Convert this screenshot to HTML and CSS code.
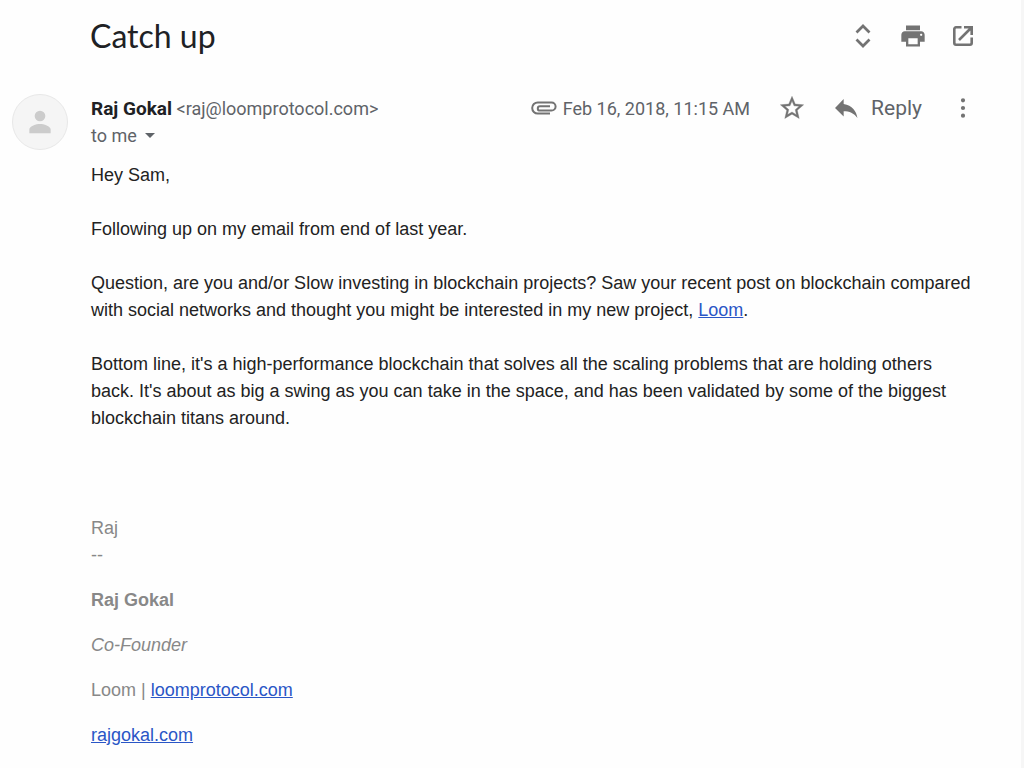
FILE: index.html
```html
<!DOCTYPE html>
<html lang="en">
<head>
<meta charset="utf-8">
<title>Catch up</title>
<meta name="viewport" content="width=device-width, initial-scale=1">
<link rel="stylesheet" href="styles.css">
</head>
<body>
<main class="mail">
  <header class="subject-bar">
    <h1 class="subject">Catch up</h1>
    <div class="tools">
      <button class="icon-button" type="button" aria-label="Expand all">
        <svg class="icon" viewBox="0 0 28 28"><path d="M7.500 10.500 14 4l6.500 6.500M7.500 17.500 14 24l6.500-6.500" fill="none" stroke="currentColor" stroke-width="2.700"/></svg>
      </button>
      <button class="icon-button" type="button" aria-label="Print">
        <svg class="icon" viewBox="0 0 24 24"><path fill="currentColor" d="M19 8H5c-1.660 0-3 1.340-3 3v6h4v4h12v-4h4v-6c0-1.660-1.340-3-3-3zm-3 11H8v-5h8v5zm3-7c-.55 0-1-.45-1-1s.45-1 1-1 1 .45 1 1-.45 1-1 1zm-1-9H6v4h12V3z"/></svg>
      </button>
      <button class="icon-button" type="button" aria-label="Open in new window">
        <svg class="icon" viewBox="0 0 28 28"><path d="M12.500 5.300H7a1.700 1.700 0 0 0-1.700 1.700v14A1.700 1.700 0 0 0 7 22.700h14a1.700 1.700 0 0 0 1.700-1.700v-5.500M10 18 21.500 6.500M15 5.300h7.700V13" fill="none" stroke="currentColor" stroke-width="2.600"/></svg>
      </button>
    </div>
  </header>

  <article class="message">
    <div class="avatar">
      <svg class="person" viewBox="0 0 24 24" aria-hidden="true"><path fill="currentColor" d="M12 11.500a4 4 0 1 0 0-8 4 4 0 0 0 0 8zm0 2c-2.700 0-8 1.400-8 4.200V20.500h16v-2.800c0-2.800-5.300-4.200-8-4.200z"/></svg>
    </div>
    <div class="content">
      <div class="meta">
        <div class="sender"><strong class="name">Raj Gokal</strong> <span class="address">&lt;raj@loomprotocol.com&gt;</span></div>
        <div class="date">
          <svg class="clip" viewBox="0 0 26 16" aria-hidden="true"><path d="M19 13.600H6.800a5.600 5.600 0 0 1 0-11.200H20.500a4.100 4.100 0 0 1 0 8.200H9a2.100 2.100 0 0 1 0-4.400H19" fill="none" stroke="currentColor" stroke-width="2"/></svg>
          <time datetime="2018-02-16T11:15">Feb 16, 2018, 11:15 AM</time>
        </div>
        <button class="icon-button" type="button" aria-label="Star">
          <svg class="icon" viewBox="0 0 24 24"><path fill="currentColor" stroke="currentColor" stroke-width=".3" d="m22 9.240-7.190-.62L12 2 9.190 8.630 2 9.240l5.460 4.730L5.820 21 12 17.270 18.180 21l-1.630-7.030L22 9.240zM12 15.400l-3.760 2.270 1-4.280-3.320-2.880 4.380-.38L12 6.100l1.710 4.040 4.380.38-3.320 2.880 1 4.280L12 15.400z"/></svg>
        </button>
        <button class="reply" type="button">
          <svg class="icon" viewBox="0 0 24 24" aria-hidden="true"><path fill="currentColor" d="M10 8.500V4.300L2.600 12l7.400 7.300v-4.500c5 0 8.600 1.500 11.800 5.700-.9-5.800-4.400-11-11.800-12z"/></svg>
          <span class="reply-label">Reply</span>
        </button>
        <button class="icon-button" type="button" aria-label="More">
          <svg class="icon" viewBox="0 0 24 24"><path fill="currentColor" d="M12 7.200a1.800 1.800 0 1 0 0-3.600 1.800 1.800 0 0 0 0 3.600zm0 3a1.800 1.800 0 1 0 0 3.600 1.800 1.800 0 0 0 0-3.600zm0 6.600a1.800 1.800 0 1 0 0 3.600 1.800 1.800 0 0 0 0-3.600z"/></svg>
        </button>
      </div>
      <button class="recipient" type="button">to me
        <svg class="caret" viewBox="0 0 10 5" aria-hidden="true"><path fill="currentColor" d="M0 0h10L5 5z"/></svg>
      </button>

      <div class="body">
        <p>Hey Sam,</p>
        <p>Following up on my email from end of last year.</p>
        <p>Question, are you and/or Slow investing in blockchain projects? Saw your recent post on blockchain compared with social networks and thought you might be interested in my new project, <a href="#loom">Loom</a>.</p>
        <p>Bottom line, it's a high-performance blockchain that solves all the scaling problems that are holding others back. It's about as big a swing as you can take in the space, and has been validated by some of the biggest blockchain titans around.</p>
      </div>

      <footer class="signature">
        <p>Raj<br>--</p>
        <p><strong>Raj Gokal</strong></p>
        <p><em>Co-Founder</em></p>
        <p>Loom | <a href="#loomprotocol">loomprotocol.com</a></p>
        <p><a href="#rajgokal">rajgokal.com</a></p>
      </footer>
    </div>
  </article>
</main>
</body>
</html>
```
FILE: styles.css
```css
* {
  box-sizing: border-box;
}

body {
  margin: 0;
  background: #fefefe;
  color: #222;
  font-family: "Liberation Sans", Arial, sans-serif;
  font-size: 18px;
  line-height: 27px;
}

h1,
p {
  margin: 0;
}

button {
  padding: 0;
  border: 0;
  background: none;
  color: #737373;
  font-family: Roboto, sans-serif;
  cursor: pointer;
}

a {
  color: #2a56c6;
}

.mail {
  min-height: 100vh;
  padding: 16px 44px 16px 12px;
  border-right: 3px solid #f6f6f6;
}

.subject-bar {
  display: flex;
  align-items: center;
  justify-content: space-between;
  height: 40px;
  padding-left: 78px;
}

.subject {
  color: #202124;
  font-family: Lato, sans-serif;
  font-size: 32px;
  font-weight: 400;
  line-height: 38px;
}

.tools {
  display: flex;
  gap: 22px;
}

.icon-button {
  display: flex;
}

.icon {
  width: 28px;
  height: 28px;
}

.message {
  display: flex;
  gap: 23px;
  margin-top: 38px;
}

.avatar {
  display: flex;
  flex: none;
  align-items: center;
  justify-content: center;
  width: 56px;
  height: 56px;
  border: 1px solid #e8e8e8;
  border-radius: 50%;
  background: #f5f5f5;
  color: #ccc;
}

.person {
  width: 32px;
  height: 32px;
}

.content {
  flex: 1;
  min-width: 0;
}

.meta {
  display: flex;
  align-items: center;
  height: 28px;
  color: #5f6368;
  font-family: Roboto, sans-serif;
  font-size: 18px;
}

.sender {
  flex: 1;
  white-space: nowrap;
}

.name {
  color: #202124;
  font-size: 19px;
}

.date {
  display: flex;
  align-items: center;
  gap: 6px;
  margin-right: 28px;
  white-space: nowrap;
}

.clip {
  width: 26px;
  height: 16px;
  color: #737373;
}

.reply {
  display: flex;
  align-items: center;
  gap: 11px;
  margin: 0 27px 0 26px;
}

.reply-label {
  color: #5f6368;
  font-size: 21px;
}

.recipient {
  display: flex;
  align-items: center;
  gap: 8px;
  height: 26px;
  color: #5f6368;
  font-size: 18px;
}

.caret {
  width: 10px;
  height: 5px;
}

.body {
  display: grid;
  gap: 27px;
  margin-top: 14px;
}

.signature {
  display: grid;
  gap: 18px;
  margin-top: 83px;
  color: #888;
}
```
